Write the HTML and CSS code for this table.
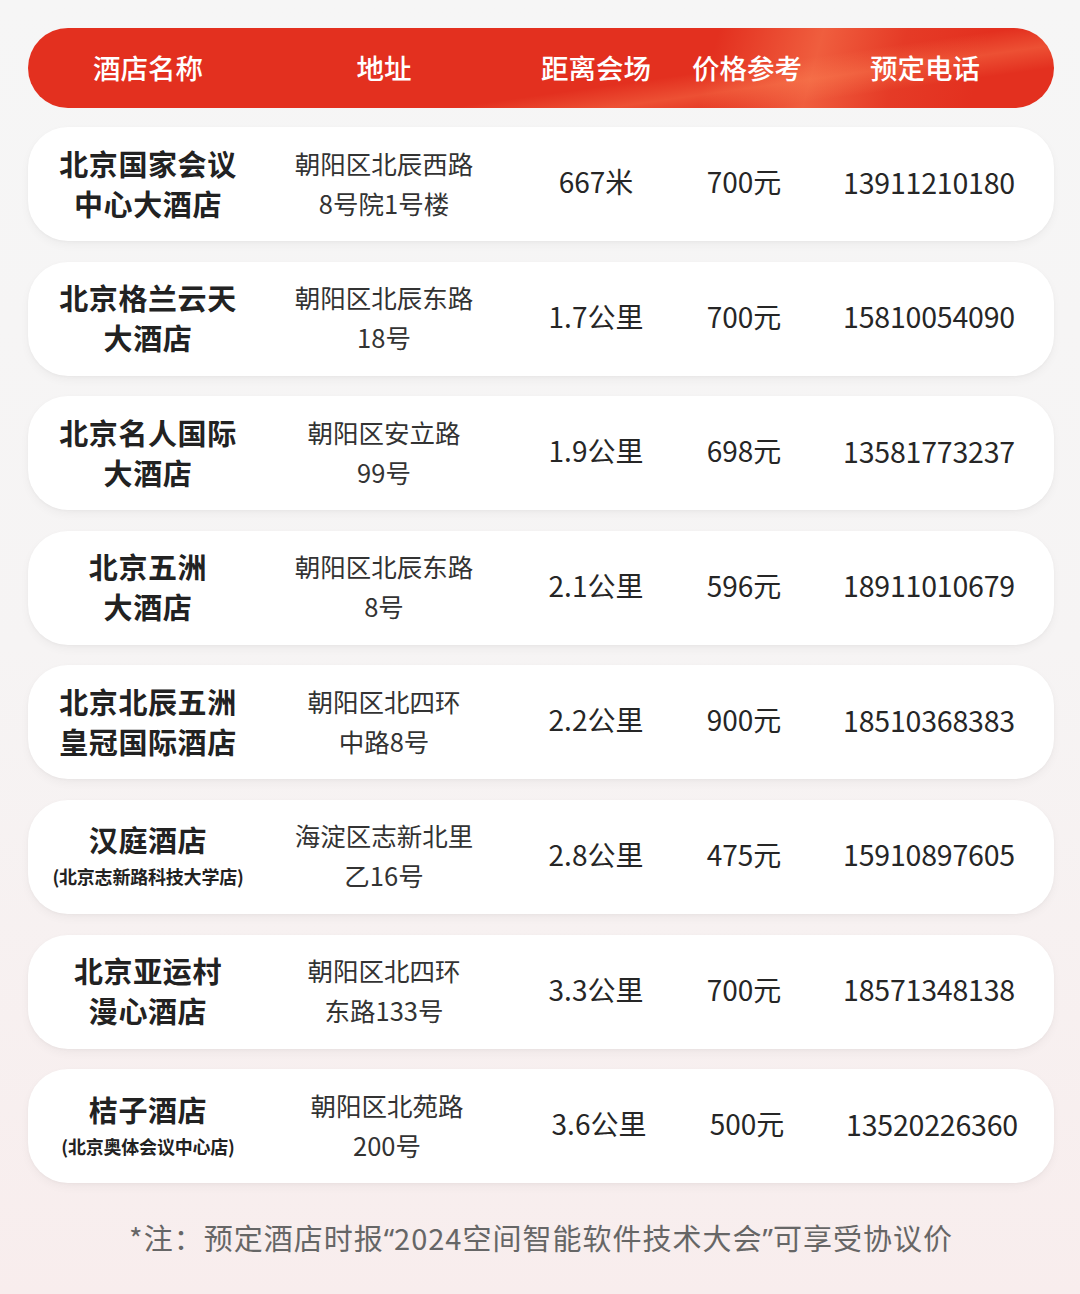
FILE: index.html
```html
<!DOCTYPE html>
<html lang="zh-CN">
<head>
<meta charset="utf-8">
<link rel="stylesheet" href="styles.css">
</head>
<body>
<div class="page">
  <div class="head grid">
    <div>酒店名称</div>
    <div>地址</div>
    <div>距离会场</div>
    <div>价格参考</div>
    <div>预定电话</div>
  </div>
  <div class="rows">
    <div class="card grid">
      <div class="name">北京国家会议<br>中心大酒店</div>
      <div class="addr">朝阳区北辰西路<br>8号院1号楼</div>
      <div class="val">667米</div>
      <div class="val">700元</div>
      <div class="val ph">13911210180</div>
    </div>
    <div class="card grid">
      <div class="name">北京格兰云天<br>大酒店</div>
      <div class="addr">朝阳区北辰东路<br>18号</div>
      <div class="val">1.7公里</div>
      <div class="val">700元</div>
      <div class="val ph">15810054090</div>
    </div>
    <div class="card grid">
      <div class="name">北京名人国际<br>大酒店</div>
      <div class="addr">朝阳区安立路<br>99号</div>
      <div class="val">1.9公里</div>
      <div class="val">698元</div>
      <div class="val ph">13581773237</div>
    </div>
    <div class="card grid">
      <div class="name">北京五洲<br>大酒店</div>
      <div class="addr">朝阳区北辰东路<br>8号</div>
      <div class="val">2.1公里</div>
      <div class="val">596元</div>
      <div class="val ph">18911010679</div>
    </div>
    <div class="card grid">
      <div class="name">北京北辰五洲<br>皇冠国际酒店</div>
      <div class="addr">朝阳区北四环<br>中路8号</div>
      <div class="val">2.2公里</div>
      <div class="val">900元</div>
      <div class="val ph">18510368383</div>
    </div>
    <div class="card grid">
      <div class="name">汉庭酒店<span class="sub">(北京志新路科技大学店)</span></div>
      <div class="addr">海淀区志新北里<br>乙16号</div>
      <div class="val">2.8公里</div>
      <div class="val">475元</div>
      <div class="val ph">15910897605</div>
    </div>
    <div class="card grid">
      <div class="name">北京亚运村<br>漫心酒店</div>
      <div class="addr">朝阳区北四环<br>东路133号</div>
      <div class="val">3.3公里</div>
      <div class="val">700元</div>
      <div class="val ph">18571348138</div>
    </div>
    <div class="card grid last">
      <div class="name">桔子酒店<span class="sub">(北京奥体会议中心店)</span></div>
      <div class="addr">朝阳区北苑路<br>200号</div>
      <div class="val">3.6公里</div>
      <div class="val">500元</div>
      <div class="val ph">13520226360</div>
    </div>
  </div>
  <p class="note">*注：预定酒店时报<span class="q">“</span>2024空间智能软件技术大会<span class="q">”</span>可享受协议价</p>
</div>
</body>
</html>
```

FILE: styles.css
```css
html, body {
  margin: 0;
  padding: 0;
}
body {
  width: 1080px;
  height: 1294px;
  overflow: hidden;
  background: linear-gradient(180deg, #f6f6f6 0%, #f6f4f4 50%, #f8eded 100%);
  font-family: "Noto Sans CJK SC", "Noto Sans", sans-serif;
  color: #262626;
}
.page {
  padding: 28px 26px 0 28px;
}
.grid {
  display: grid;
  grid-template-columns: 240px 232px 192px 104px 258px;
  align-items: center;
  text-align: center;
  white-space: nowrap;
}
.card > .ph {
  padding-left: 8px;
}
.head {
  height: 80px;
  border-radius: 40px;
  background:
    linear-gradient(172deg, transparent 62%, rgba(255, 140, 90, 0.35) 72%, transparent 82%),
    linear-gradient(105deg, transparent 66%, rgba(255, 150, 100, 0.45) 76%, rgba(240, 120, 80, 0.15) 84%, transparent 92%),
    #e3301f;
  color: #fff;
  font-size: 27.5px;
  font-weight: 500;
  line-height: 1;
  box-sizing: border-box;
}
.rows {
  display: flex;
  flex-direction: column;
  gap: 20.6px;
  margin-top: 19px;
}
.card {
  height: 114px;
  background: #fff;
  border-radius: 40px;
  box-shadow: 0 4px 10px rgba(0, 0, 0, 0.04), 0 1px 3px rgba(0, 0, 0, 0.03);
}
.name {
  font-size: 29px;
  font-weight: 700;
  line-height: 40px;
  letter-spacing: 0.6px;
  color: #222;
  display: flex;
  flex-direction: column;
  align-items: center;
  padding-bottom: 3px;
}
.sub {
  font-size: 18px;
  line-height: 30px;
  letter-spacing: -0.2px;
  margin-top: 2px;
}
.addr {
  font-size: 25.5px;
  line-height: 40px;
  color: #333;
  padding-bottom: 3px;
}
.val {
  font-size: 28px;
  color: #262626;
  padding-bottom: 6px;
}
.val.ph {
  font-size: 28.5px;
  letter-spacing: -0.2px;
}
.last .val,
.last .addr {
  position: relative;
  left: 3px;
}
.note {
  margin: 30px 0 0 0;
  text-align: center;
  font-size: 29px;
  color: #666;
  line-height: 48px;
  letter-spacing: 1px;
}
.note .q {
  font-family: "Noto Sans", "DejaVu Sans", sans-serif;
  letter-spacing: 0;
}
```
